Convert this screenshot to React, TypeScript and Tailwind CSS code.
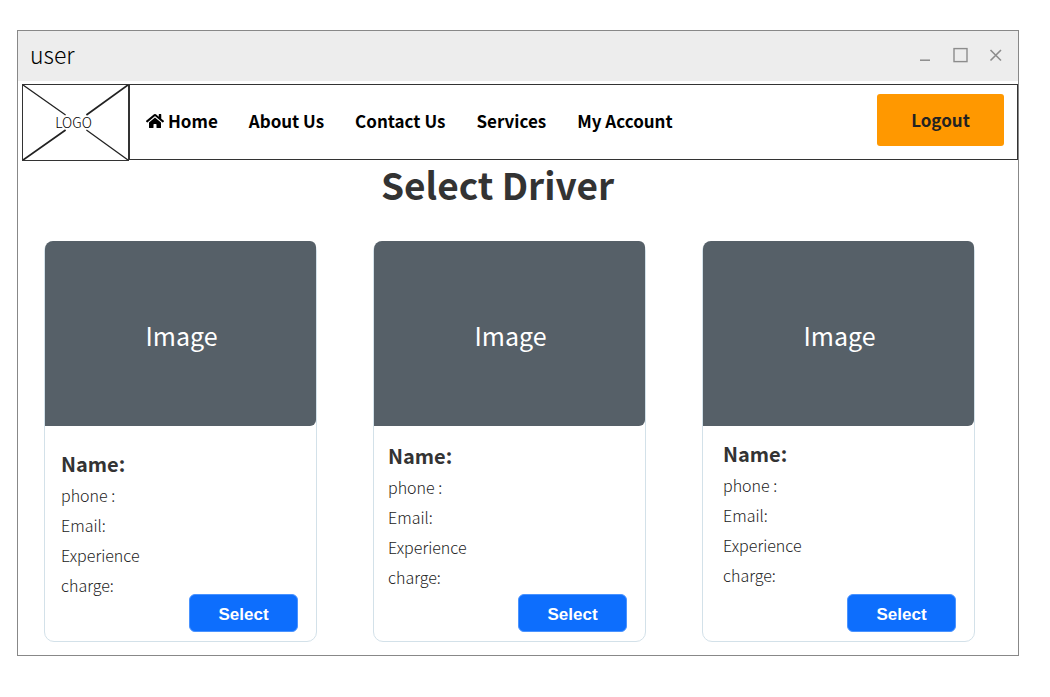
import { FaHome } from "react-icons/fa";

const navLinks = ["About Us", "Contact Us", "Services", "My Account"];

const drivers = [
  { id: "driver-1", body: "pt-[26px] pl-4" },
  { id: "driver-2", body: "pt-[18px] pl-3.5" },
  { id: "driver-3", body: "pt-4 pl-5" },
];

function WindowControls() {
  return (
    <div className="flex items-center gap-4 text-[#8c8c8c]">
      <button type="button" aria-label="Minimize" className="size-5">
        <svg viewBox="0 0 20 20" className="size-5" fill="none" stroke="currentColor" strokeWidth="1.5">
          <path d="M6 15.2H16" />
        </svg>
      </button>
      <button type="button" aria-label="Maximize" className="size-5">
        <svg viewBox="0 0 20 20" className="size-5" fill="none" stroke="currentColor" strokeWidth="1.4">
          <rect x="4" y="3.6" width="13" height="13" />
        </svg>
      </button>
      <button type="button" aria-label="Close" className="size-5">
        <svg viewBox="0 0 20 20" className="size-5" fill="none" stroke="currentColor" strokeWidth="1.6">
          <path d="M4.5 5L15 15.5M15 5L4.5 15.5" />
        </svg>
      </button>
    </div>
  );
}

function Logo() {
  return (
    <a href="#logo" className="relative flex h-[77px] w-[107px] shrink-0 items-center justify-center border border-[#333] text-sm font-light text-black">
      <svg viewBox="0 0 106 75" preserveAspectRatio="none" className="absolute inset-0 size-full" fill="none" stroke="#222">
        <path d="M0 0L43 30M64 45L106 75" strokeWidth="1.3" />
        <path d="M106 0L64 30M43 45L0 75" strokeWidth="1.8" />
      </svg>
      <span className="relative pr-1 pb-0.5">LOGO</span>
    </a>
  );
}

function DriverCard({ id, body }: { id: string; body: string }) {
  return (
    <article className="flex h-[401px] flex-col rounded-[10px] border border-[#d3e1e9]">
      <div className="-mt-px flex h-[185px] shrink-0 items-center justify-center rounded-tl-lg rounded-r-md bg-[#566068] pt-1 pl-0.5 text-[25px] text-white">
        Image
      </div>
      <div className={`flex flex-1 flex-col pr-[18px] pb-[9px] ${body}`}>
        <h2 id={id} className="text-xl leading-6 font-bold text-[#333]">Name:</h2>
        <div className="mt-[11px] flex flex-col gap-[14px] text-base leading-4 font-light text-[#222]">
          <p>phone :</p>
          <p>Email:</p>
          <p>Experience</p>
          <p>charge:</p>
        </div>
        <button
          type="button"
          aria-describedby={id}
          className="mt-auto h-[38px] w-[109px] shrink-0 self-end rounded-md border border-[#4a93ff] bg-[#0d6efd] pt-0.5 font-['Liberation_Sans',sans-serif] text-[17px] leading-none font-bold text-white"
        >
          Select
        </button>
      </div>
    </article>
  );
}

export default function App() {
  return (
    <div className="bg-white py-[30px] pr-[31px] pl-[17px] font-['Noto_Sans_CJK_SC',sans-serif]">
      <div className="border border-[#888]">
        <div className="flex h-[50px] items-center justify-between bg-[#ededed] px-3 pb-0.5">
          <span className="pb-[3px] text-[23px] leading-8 font-light text-black">user</span>
          <WindowControls />
        </div>
        <header className="mt-[3px] flex items-start pl-1">
          <Logo />
          <div className="flex h-[76px] flex-1 items-center justify-between border border-[#333] pr-[13px] pb-1 pl-4">
            <nav className="flex items-center gap-[31px] pt-0.5 text-[17px] leading-6 font-bold text-black">
              <a href="#home" className="flex items-center gap-1">
                <FaHome className="size-[18px]" />
                Home
              </a>
              {navLinks.map((label) => (
                <a key={label} href="#nav">{label}</a>
              ))}
            </nav>
            <button type="button" className="h-[52px] w-[127px] rounded-[3px] bg-[#ff9800] text-[17px] font-bold text-[#222]">
              Logout
            </button>
          </div>
        </header>
        <main className="pr-[43px] pb-[13px] pl-[26px]">
          <h1 className="pr-6 text-center text-[37px] leading-[46px] font-bold text-[#333]">Select Driver</h1>
          <div className="mt-[34px] grid grid-cols-3 gap-14">
            {drivers.map((driver) => (
              <DriverCard key={driver.id} {...driver} />
            ))}
          </div>
        </main>
      </div>
    </div>
  );
}
